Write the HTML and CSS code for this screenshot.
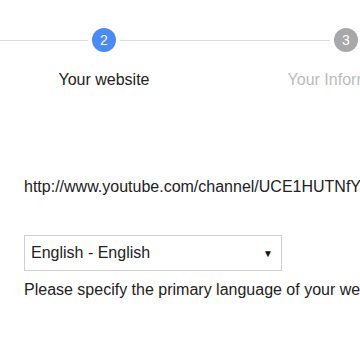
FILE: index.html
```html
<!DOCTYPE html>
<html>
<head>
<meta charset="utf-8">
<link rel="stylesheet" href="styles.css">
</head>
<body>
<div class="page">
  <div class="steps">
    <div class="step active">
      <div class="head"><span class="line"></span><span class="dot">2</span><span class="line"></span></div>
      <div class="label">Your website</div>
    </div>
    <div class="step">
      <div class="head"><span class="line"></span><span class="dot">3</span><span class="line"></span></div>
      <div class="label">Your Information</div>
    </div>
  </div>
  <div class="form">
    <div class="url">http://www.youtube.com/channel/UCE1HUTNfY</div>
    <div class="select"><span>English - English</span><span class="arrow">&#9660;</span></div>
    <div class="help">Please specify the primary language of your website</div>
  </div>
</div>
</body>
</html>
```
FILE: styles.css
```css
html, body {
  margin: 0;
  padding: 0;
  background: #ffffff;
  overflow: hidden;
}
body {
  width: 360px;
  height: 360px;
  font-family: "Liberation Sans", Arial, sans-serif;
  color: #222222;
}
.page {
  width: 360px;
  height: 360px;
  overflow: hidden;
}
.steps {
  display: flex;
  margin-left: -17px;
  padding-top: 28px;
  width: 600px;
}
.step {
  width: 242px;
  flex: none;
  display: flex;
  flex-direction: column;
  align-items: center;
}
.head {
  display: flex;
  align-items: center;
  width: 100%;
  height: 24px;
}
.line {
  flex: 1;
  height: 1px;
  background: #dddddd;
}
.dot {
  width: 24px;
  height: 24px;
  border-radius: 50%;
  margin: 0 4px;
  background: #a8a8a8;
  color: #ffffff;
  font-size: 14px;
  line-height: 24px;
  text-align: center;
}
.step.active .dot {
  background: #4a8af4;
}
.label {
  margin-top: 19px;
  font-size: 16px;
  line-height: 18px;
  color: #bbbbbb;
  white-space: nowrap;
}
.step.active .label {
  color: #222222;
}
.form {
  padding-left: 24px;
  margin-top: 89px;
}
.url {
  font-size: 16px;
  line-height: 18px;
  white-space: nowrap;
}
.select {
  margin-top: 39px;
  border: 1px solid #d0d0d0;
  display: flex;
  align-items: center;
  justify-content: space-between;
  padding: 0 8px 0 6px;
  box-sizing: border-box;
  width: 258px;
  height: 36px;
  font-size: 16px;
}
.arrow {
  font-size: 10px;
  color: #111;
}
.help {
  margin-top: 10px;
  font-size: 16px;
  line-height: 18px;
  white-space: nowrap;
}
```
